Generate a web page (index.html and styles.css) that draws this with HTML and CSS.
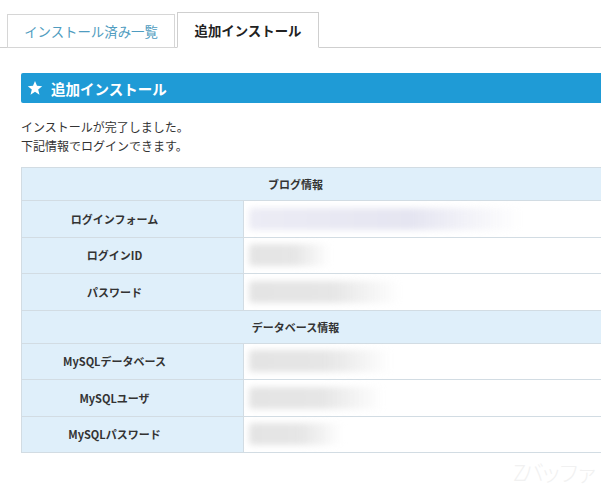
FILE: index.html
```html
<!DOCTYPE html>
<html lang="ja">
<head>
<meta charset="utf-8">
<title>追加インストール</title>
<link rel="stylesheet" href="styles.css">
</head>
<body>
<div class="page">
  <div class="tabs">
    <div class="tab">インストール済み一覧</div>
    <div class="tab active">追加インストール</div>
  </div>
  <div class="content">
    <h2 class="title-bar">
      <svg class="star" viewBox="0 0 24 24" width="16" height="16"><polygon points="12,1.5 15,8.8 22.8,9.3 16.8,14.4 18.7,22 12,17.8 5.3,22 7.2,14.4 1.2,9.3 9,8.8" fill="#fff"/></svg>
      <span>追加インストール</span>
    </h2>
    <p class="message">インストールが完了しました。<br>下記情報でログインできます。</p>
    <table class="info">
      <colgroup><col class="col-label"><col></colgroup>
      <tr class="section"><th colspan="2">ブログ情報</th></tr>
      <tr><th>ログインフォーム</th><td><div class="blur lav" style="width:272px"></div></td></tr>
      <tr><th>ログインID</th><td><div class="blur" style="width:82px"></div></td></tr>
      <tr><th>パスワード</th><td><div class="blur" style="width:152px"></div></td></tr>
      <tr class="section"><th colspan="2">データベース情報</th></tr>
      <tr><th>MySQLデータベース</th><td><div class="blur" style="width:142px"></div></td></tr>
      <tr><th>MySQLユーザ</th><td><div class="blur" style="width:134px"></div></td></tr>
      <tr><th>MySQLパスワード</th><td><div class="blur" style="width:94px"></div></td></tr>
    </table>
  </div>
  <div class="watermark">Zバッファ</div>
</div>
</body>
</html>
```
FILE: styles.css
```css
html, body {
  margin: 0;
  padding: 0;
  background: #fff;
}
body {
  width: 601px;
  height: 488px;
  overflow: hidden;
  font-family: "Noto Sans CJK JP", "Noto Sans", sans-serif;
  color: #333;
}
.page {
  position: relative;
  width: 601px;
  height: 488px;
  overflow: hidden;
}
.tabs {
  display: flex;
  align-items: flex-end;
  gap: 2px;
  padding: 12px 0 0 7px;
  border-bottom: 1px solid #cfcfcf;
}
.tab {
  box-sizing: border-box;
  height: 34px;
  width: 168px;
  border: 1px solid #d6d6d6;
  margin-bottom: -1px;
  display: flex;
  align-items: center;
  justify-content: center;
  font-size: 13.4px;
  color: #4f9cc0;
  background: #fff;
}
.tab.active {
  height: 36px;
  width: 142px;
  border-color: #cfcfcf;
  border-bottom-color: #fff;
  color: #222;
  font-weight: bold;
}
.content {
  padding: 25px 0 0 21px;
  width: 585px;
}
.title-bar {
  margin: 0;
  height: 30px;
  background: #1f9bd6;
  border-radius: 2px;
  display: flex;
  align-items: center;
  gap: 8px;
  padding-left: 6px;
  color: #fff;
  font-size: 14.5px;
  font-weight: bold;
}
.star {
  display: block;
}
.message {
  margin: 14px 0 0;
  font-size: 12px;
  line-height: 19px;
  color: #333;
}
.info {
  margin-top: 12px;
  width: 585px;
  border-collapse: collapse;
  font-size: 11px;
  table-layout: fixed;
}
.col-label {
  width: 222px;
}
.info th, .info td {
  border: 1px solid #d2dce3;
  padding: 0;
}
.info th {
  background: #dfeffa;
  font-weight: bold;
  color: #333;
  padding-right: 36px;
  text-align: center;
}
.info tr {
  height: 36.5px;
}
.info tr.section {
  height: 33px;
}
.info td {
  background: #fff;
  padding-left: 5px;
}
.blur {
  height: 22px;
  background: linear-gradient(90deg, #e4e4e4 0%, #e6e6e6 55%, rgba(255,255,255,0) 100%);
  filter: blur(3px);
  border-radius: 4px;
}
.blur.lav {
  background: linear-gradient(90deg, #ececf5 0%, #e5e5f1 60%, rgba(255,255,255,0) 100%);
}
.watermark {
  position: absolute;
  left: 513px;
  top: 458px;
  font-size: 22px;
  line-height: 26px;
  font-weight: 300;
  color: #f1f1f1;
  white-space: nowrap;
  letter-spacing: -4px;
}
```
